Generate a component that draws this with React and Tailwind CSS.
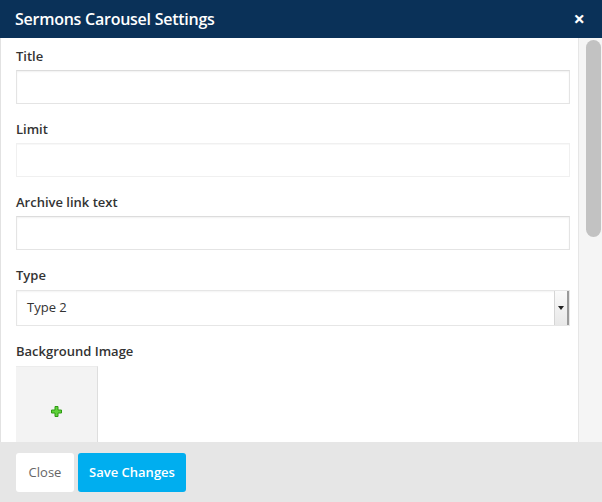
import React from 'react';

const font = { fontFamily: '"Open Sans", "Liberation Sans", sans-serif' };

const fields = [
  { label: 'Title', value: '' },
  { label: 'Limit', value: '', light: true },
  { label: 'Archive link text', value: '' },
];

const Field = ({ label, light }) => (
  <div className="mb-[16px]">
    <div className="h-[23px] text-[13px] font-semibold leading-[18px] text-[#333]">{label}</div>
    <div
      className={
        'h-[34px] w-full bg-white border ' +
        (light
          ? 'border-[#f0f0f0] shadow-[inset_0_1px_1px_rgba(0,0,0,0.03)]'
          : 'border-[#e4e4e4] border-t-[#dcdcdc] shadow-[inset_0_1px_2px_rgba(0,0,0,0.06)]')
      }
    />
  </div>
);

const App = () => {
  return (
    <div className="w-[602px] h-[502px] flex flex-col bg-white overflow-hidden" style={font}>
      {/* header */}
      <div className="h-[38px] shrink-0 bg-[#0a3158] flex items-center justify-between pl-[15px] pr-[17px]">
        <span className="text-[16px] font-semibold tracking-[-0.25px] text-white">Sermons Carousel Settings</span>
        <span className="text-[20px] font-bold text-white leading-none">×</span>
      </div>

      {/* body */}
      <div className="flex-1 flex min-h-0 border-l border-[#e2e2e2]">
        <div className="flex-1 overflow-hidden pl-[15px] pr-[8px] pt-[9px]">
          {fields.map((f) => (
            <Field key={f.label} label={f.label} light={f.light} />
          ))}

          <div className="mb-[16px]">
            <div className="h-[24px] text-[13px] font-semibold leading-[18px] text-[#333]">Type</div>
            <div className="h-[36px] w-full bg-white border border-[#e6e6e6] flex items-center shadow-[inset_0_1px_2px_rgba(0,0,0,0.05)]">
              <span className="flex-1 pl-[10px] text-[13px] text-[#333]">Type 2</span>
              <div className="w-[15px] h-full bg-gradient-to-b from-[#fafafa] to-[#e8e8e8] border-l border-[#d5d5d5] border-r-2 border-r-[#9a9a9a] flex items-center justify-center">
                <span className="w-0 h-0 border-l-[3px] border-r-[3px] border-t-[4px] border-l-transparent border-r-transparent border-t-[#222]" />
              </div>
            </div>
          </div>

          <div>
            <div className="h-[24px] text-[13px] font-semibold leading-[18px] text-[#333]">Background Image</div>
            <div className="w-[82px] h-[90px] bg-[#f3f3f3] border-r border-[#dedede] border-t border-t-[#ececec] flex items-center justify-center">
              <svg width="11" height="11" viewBox="0 0 11 11">
                <path d="M4 0.5h3v3.5h3.5v3H7v3.5H4V7H0.5V4H4z" fill="#5fd23a" stroke="#2e9a12" strokeWidth="1" />
              </svg>
            </div>
          </div>
        </div>

        {/* scrollbar */}
        <div className="w-[24px] shrink-0 bg-[#f5f5f5] border-l border-[#e6e6e6] pt-[2px] pl-[7px] pr-[1px]">
          <div className="h-[197px] w-[15px] rounded-full bg-[#c2c2c2]" />
        </div>
      </div>

      {/* footer */}
      <div className="h-[60px] shrink-0 bg-[#e6e6e6] flex items-center gap-[4px] pl-[16px] pt-[1px]">
        <button className="h-[39px] w-[58px] rounded-[3px] bg-white text-[13px] text-[#666]">Close</button>
        <button className="h-[39px] w-[108px] rounded-[3px] bg-[#00aeef] text-[13px] font-semibold text-white">
          Save Changes
        </button>
      </div>
    </div>
  );
};

export default App;
